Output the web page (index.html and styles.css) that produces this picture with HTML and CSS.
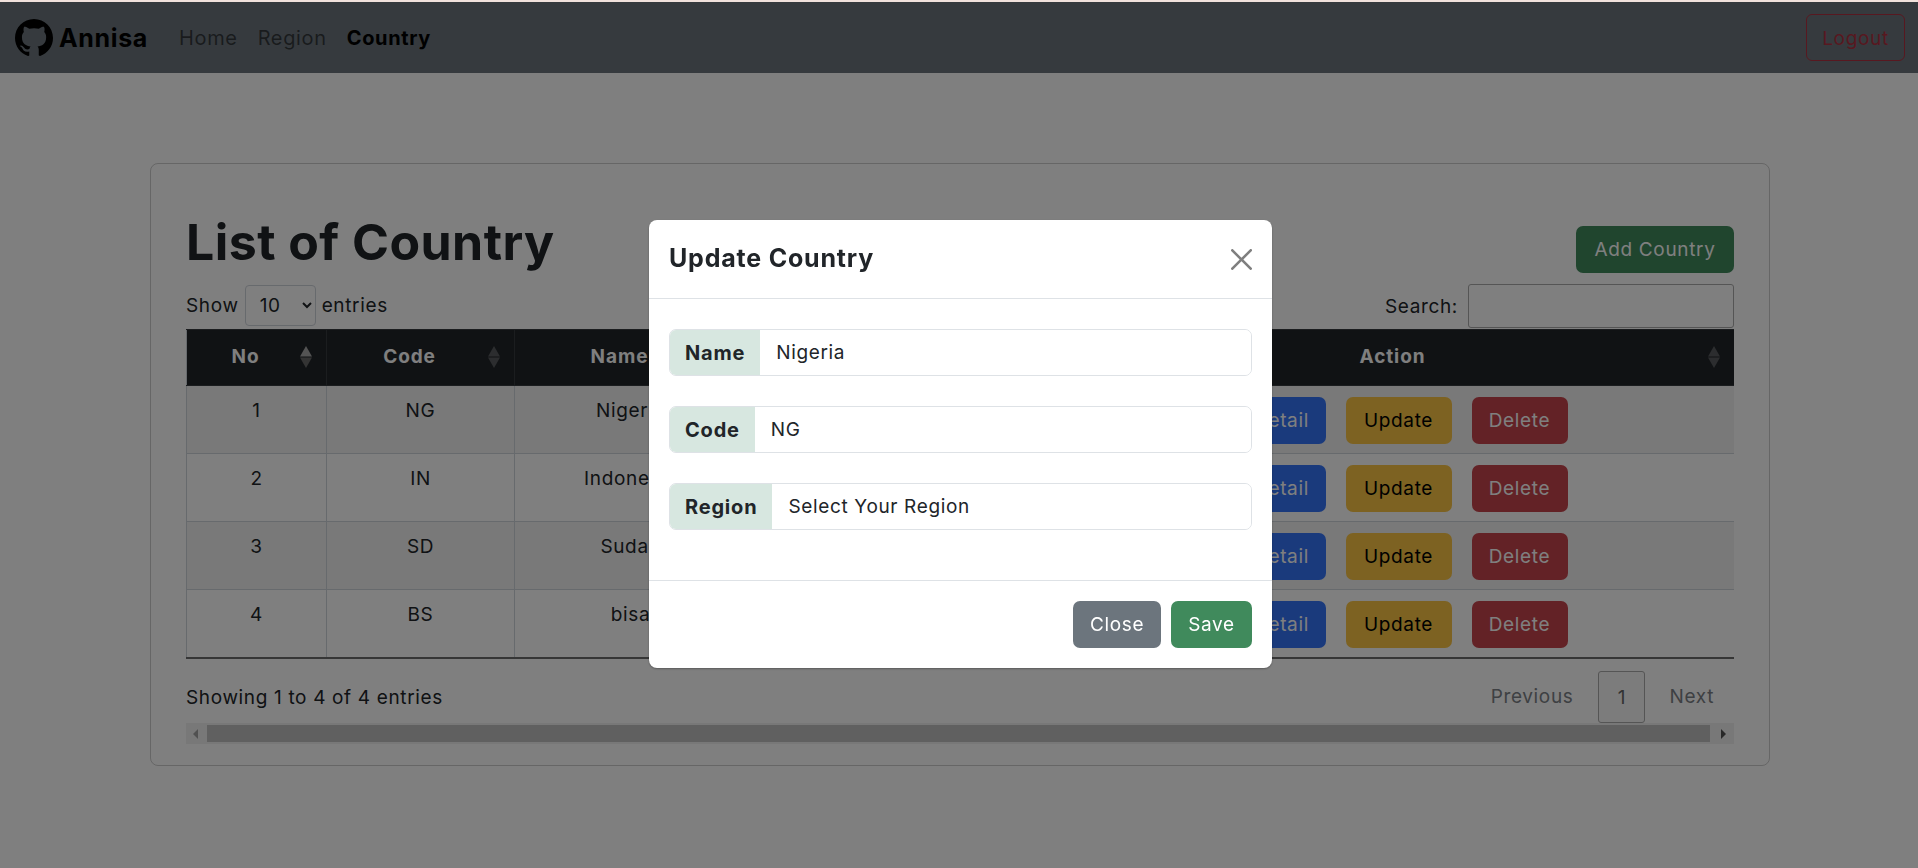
FILE: index.html
```html
<!DOCTYPE html>
<html lang="en">

<head>
    <meta charset="UTF-8">
    <meta name="viewport" content="width=device-width, initial-scale=1.0">
    <title>List of Country</title>
    <link rel="stylesheet" href="styles.css">
</head>

<body>
    <div class="top-strip"></div>

    <nav class="navbar">
        <a class="brand" href="#">
            <svg class="brand-logo" viewBox="0 0 16 16" fill="currentColor">
                <path d="M8 0C3.58 0 0 3.58 0 8c0 3.54 2.29 6.53 5.47 7.59.4.07.55-.17.55-.38 0-.19-.01-.82-.01-1.49-2.01.37-2.53-.49-2.69-.94-.09-.23-.48-.94-.82-1.13-.28-.15-.68-.52-.01-.53.63-.01 1.08.58 1.23.82.72 1.21 1.87.87 2.33.66.07-.52.28-.87.51-1.07-1.78-.2-3.64-.89-3.64-3.95 0-.87.31-1.59.82-2.15-.08-.2-.36-1.02.08-2.12 0 0 .67-.21 2.2.82.64-.18 1.32-.27 2-.27.68 0 1.36.09 2 .27 1.53-1.04 2.2-.82 2.2-.82.44 1.1.16 1.92.08 2.12.51.56.82 1.27.82 2.15 0 3.07-1.87 3.75-3.65 3.95.29.25.54.73.54 1.48 0 1.07-.01 1.93-.01 2.2 0 .21.15.46.55.38A8.013 8.013 0 0016 8c0-4.42-3.58-8-8-8z" />
            </svg>
            <span>Annisa</span>
        </a>
        <div class="nav-links">
            <a href="#">Home</a>
            <a href="#">Region</a>
            <a class="active" href="#">Country</a>
        </div>
        <button class="logout">Logout</button>
    </nav>

    <main class="card">
        <div class="title-row">
            <h1>List of Country</h1>
            <button class="btn btn-green add-btn">Add Country</button>
        </div>

        <div class="controls">
            <label class="length">Show <select>
                    <option>10</option>
                </select> entries</label>
            <label class="search">Search: <input type="text"></label>
        </div>

        <table>
            <colgroup>
                <col class="col-no">
                <col class="col-code">
                <col class="col-name">
                <col class="col-region">
                <col class="col-action">
            </colgroup>
            <thead>
                <tr>
                    <th>No<svg class="sort" viewBox="0 0 12 22"><path class="up on" d="M6 0l6 10.5H0z" /><path class="down off" d="M6 22L0 11.5h12z" /></svg></th>
                    <th>Code<svg class="sort" viewBox="0 0 12 22"><path class="up" d="M6 0l6 10.5H0z" /><path class="down" d="M6 22L0 11.5h12z" /></svg></th>
                    <th>Name<svg class="sort" viewBox="0 0 12 22"><path class="up" d="M6 0l6 10.5H0z" /><path class="down" d="M6 22L0 11.5h12z" /></svg></th>
                    <th>Region<svg class="sort" viewBox="0 0 12 22"><path class="up" d="M6 0l6 10.5H0z" /><path class="down" d="M6 22L0 11.5h12z" /></svg></th>
                    <th>Action<svg class="sort" viewBox="0 0 12 22"><path class="up" d="M6 0l6 10.5H0z" /><path class="down" d="M6 22L0 11.5h12z" /></svg></th>
                </tr>
            </thead>
            <tbody>
                <tr>
                    <td>1</td>
                    <td>NG</td>
                    <td>Nigeria</td>
                    <td>Africa</td>
                    <td class="actions"><button class="btn btn-blue">Detail</button><button class="btn btn-yellow">Update</button><button class="btn btn-red">Delete</button></td>
                </tr>
                <tr>
                    <td>2</td>
                    <td>IN</td>
                    <td>Indonesia</td>
                    <td>Asia</td>
                    <td class="actions"><button class="btn btn-blue">Detail</button><button class="btn btn-yellow">Update</button><button class="btn btn-red">Delete</button></td>
                </tr>
                <tr>
                    <td>3</td>
                    <td>SD</td>
                    <td>Sudan</td>
                    <td>Africa</td>
                    <td class="actions"><button class="btn btn-blue">Detail</button><button class="btn btn-yellow">Update</button><button class="btn btn-red">Delete</button></td>
                </tr>
                <tr>
                    <td>4</td>
                    <td>BS</td>
                    <td>bisa</td>
                    <td>Asia</td>
                    <td class="actions"><button class="btn btn-blue">Detail</button><button class="btn btn-yellow">Update</button><button class="btn btn-red">Delete</button></td>
                </tr>
            </tbody>
        </table>

        <div class="table-foot">
            <div class="info">Showing 1 to 4 of 4 entries</div>
            <div class="pager">
                <a href="#">Previous</a>
                <a class="current" href="#">1</a>
                <a href="#">Next</a>
            </div>
        </div>

        <div class="scrollbar">
            <span class="arrow arrow-left"></span>
            <span class="thumb"></span>
            <span class="arrow arrow-right"></span>
        </div>
    </main>

    <div class="backdrop"></div>

    <div class="modal">
        <div class="modal-header">
            <h2>Update Country</h2>
            <button class="close" aria-label="Close">
                <svg viewBox="0 0 16 16" fill="currentColor">
                    <path d="M.293.293a1 1 0 011.414 0L8 6.586 14.293.293a1 1 0 111.414 1.414L9.414 8l6.293 6.293a1 1 0 01-1.414 1.414L8 9.414l-6.293 6.293a1 1 0 01-1.414-1.414L6.586 8 .293 1.707a1 1 0 010-1.414z" />
                </svg>
            </button>
        </div>
        <div class="modal-body">
            <div class="input-group">
                <span class="input-label">Name</span>
                <input type="text" value="Nigeria">
            </div>
            <div class="input-group">
                <span class="input-label">Code</span>
                <input type="text" value="NG">
            </div>
            <div class="input-group">
                <span class="input-label">Region</span>
                <select>
                    <option>Select Your Region</option>
                </select>
            </div>
        </div>
        <div class="modal-footer">
            <button class="btn btn-grey">Close</button>
            <button class="btn btn-green">Save</button>
        </div>
    </div>
</body>

</html>
```

FILE: styles.css
```css
* {
    box-sizing: border-box;
}

body {
    margin: 0;
    background-color: white;
    color: #212529;
    font-family: "Inter", "Liberation Sans", sans-serif;
    font-size: 19px;
    letter-spacing: 0.65px;
    overflow: hidden;
}

a {
    text-decoration: none;
    color: inherit;
}

.top-strip {
    height: 2px;
    background-color: #f2e2dc;
}

/* navbar */
.navbar {
    display: flex;
    align-items: center;
    height: 71px;
    padding: 0 13px 0 15px;
    background-color: #6c757d;
}

.brand {
    display: flex;
    align-items: center;
    gap: 6px;
    color: black;
    font-size: 25px;
    font-weight: 700;
}

.brand-logo {
    width: 38px;
    height: 38px;
}

.nav-links {
    display: flex;
    gap: 20px;
    margin-left: 31px;
    font-size: 20px;
    color: rgba(0, 0, 0, 0.55);
}

.nav-links .active {
    color: black;
    font-weight: 700;
}

.logout {
    margin-left: auto;
    width: 99px;
    height: 47px;
    padding: 2px 0 0;
    font: inherit;
    letter-spacing: inherit;
    color: #b03040;
    background: none;
    border: 1px solid #b03040;
    border-radius: 6px;
}

/* card */
.card {
    width: 1620px;
    margin: 90px 0 0 150px;
    padding: 36px 35px 21px;
    border: 1px solid rgba(0, 0, 0, 0.2);
    border-radius: 8px;
}

.title-row {
    display: flex;
    justify-content: space-between;
    height: 84px;
}

h1 {
    margin: 12px 0 0;
    font-size: 50px;
    font-weight: 700;
    letter-spacing: 0.45px;
    line-height: 60px;
}

.add-btn {
    margin-top: 26px;
    width: 158px;
}

.controls {
    display: flex;
    justify-content: space-between;
    align-items: flex-start;
    height: 45px;
}

.length {
    display: flex;
    align-items: center;
    gap: 6px;
    height: 41px;
    margin-top: 1px;
}

.length select {
    width: 71px;
    height: 41px;
    padding-left: 10px;
    font: inherit;
    letter-spacing: inherit;
    color: inherit;
    background-color: white;
    border: 1px solid #ced4da;
    border-radius: 4px;
}

.search {
    display: flex;
    align-items: center;
    gap: 10px;
}

.search input {
    width: 266px;
    height: 44px;
    border: 1px solid #aaa;
    border-radius: 3px;
}

/* table */
table {
    width: 1548px;
    table-layout: fixed;
    border-collapse: collapse;
}

.col-no {
    width: 140px;
}

.col-code {
    width: 188px;
}

.col-name {
    width: 232px;
}

.col-region {
    width: 326px;
}

th {
    position: relative;
    height: 56px;
    padding: 0 30px 2px 8px;
    color: white;
    font-weight: 700;
    letter-spacing: 0.9px;
    background-color: #212529;
    border: 1px solid #373b3e;
}

th:first-child,
td:first-child {
    border-left: 1px solid #ced4da;
}

th:last-child,
td:last-child {
    border-right: none;
}

.sort {
    position: absolute;
    top: 16px;
    right: 14px;
    width: 12px;
    height: 22px;
}

.up,
.down {
    fill: #585b5e;
}

.up.on {
    fill: #a8a8a8;
}

.down.off {
    fill: #686868;
}

td {
    height: 67px;
    padding: 11px 8px 9px;
    line-height: 28px;
    text-align: center;
    vertical-align: top;
    border: 1px solid #ced4da;
}

tbody tr:nth-child(odd) td {
    background-color: rgba(0, 0, 0, 0.05);
}

tbody tr:last-child td {
    border-bottom: 2px solid #6c6c6c;
}

td.actions {
    padding-right: 10px;
}

.actions .btn + .btn {
    margin-left: 20px;
}

/* buttons */
.btn {
    height: 47px;
    padding: 0;
    font: inherit;
    letter-spacing: inherit;
    border: none;
    border-radius: 7px;
}

.btn-green {
    color: white;
    background-color: #408a5c;
}

.btn-blue {
    width: 88px;
    color: white;
    background-color: #3474f8;
}

.btn-yellow {
    width: 106px;
    color: black;
    background-color: #fac444;
}

.btn-red {
    width: 96px;
    color: white;
    background-color: #c6444c;
}

.btn-grey {
    width: 88px;
    color: white;
    background-color: #6c757d;
}

/* below the table */
.table-foot {
    display: flex;
    justify-content: space-between;
    height: 64px;
}

.info {
    padding-top: 27px;
}

.pager {
    display: flex;
    align-items: flex-start;
    padding: 12px 20px 0 0;
    color: #7d8186;
}

.pager a {
    padding-top: 14px;
}

.pager .current {
    width: 47px;
    height: 52px;
    margin: 0 24px 0 25px;
    color: #666;
    text-align: center;
    background-color: #f8f8f8;
    border: 1px solid #aaa;
    border-radius: 3px;
}

.scrollbar {
    display: flex;
    align-items: center;
    height: 21px;
    background-color: #f1f1f1;
}

.thumb {
    flex: 1;
    height: 17px;
    background-color: #c1c1c1;
}

.arrow {
    width: 0;
    height: 0;
    border-style: solid;
    border-width: 5px 0 5px 5px;
    border-color: transparent;
}

.arrow-left {
    margin: 0 9px 0 7px;
    border-width: 5px 5px 5px 0;
    border-right-color: #a3a3a3;
}

.arrow-right {
    margin: 0 8px 0 11px;
    border-left-color: #505050;
}

/* modal */
.backdrop {
    position: fixed;
    inset: 2px 0 0 0;
    background-color: rgba(0, 0, 0, 0.5);
}

.modal {
    position: fixed;
    top: 220px;
    left: 649px;
    width: 623px;
    height: 448px;
    background-color: white;
    border-radius: 8px;
    box-shadow: 0 1px 2px rgba(0, 0, 0, 0.3);
}

.modal-header {
    display: flex;
    align-items: center;
    justify-content: space-between;
    height: 79px;
    padding: 0 20px;
    border-bottom: 1px solid #dee2e6;
}

h2 {
    margin: 0 0 2px;
    font-size: 25px;
    font-weight: 700;
    letter-spacing: 0.8px;
}

.close {
    display: flex;
    width: 21px;
    height: 21px;
    padding: 0;
    color: #7f7f7f;
    background: none;
    border: none;
}

.modal-body {
    display: flex;
    flex-direction: column;
    gap: 30px;
    height: 282px;
    padding: 30px 20px 0;
    border-bottom: 1px solid #dee2e6;
}

.input-group {
    display: flex;
    height: 47px;
    border: 1px solid #dee2e6;
    border-radius: 7px;
    overflow: hidden;
}

.input-label {
    display: flex;
    align-items: center;
    padding: 0 15px;
    font-size: 20px;
    font-weight: 700;
    letter-spacing: 0.8px;
    background-color: #d7e7e0;
}

.input-group input,
.input-group select {
    flex: 1;
    padding: 0 16px;
    font: inherit;
    letter-spacing: inherit;
    color: #212529;
    background: white;
    border: none;
    outline: none;
    appearance: none;
}

.modal-footer {
    display: flex;
    justify-content: flex-end;
    gap: 10px;
    padding: 20px 20px 0;
}

.modal-footer .btn-green {
    width: 81px;
}
```
